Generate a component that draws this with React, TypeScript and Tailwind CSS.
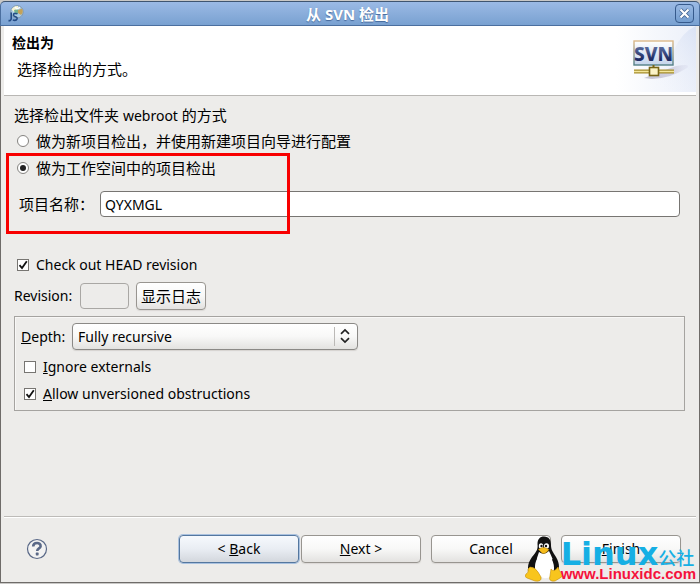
import { useState } from "react";
import type { ReactNode } from "react";

/* ── Types ─────────────────────────────────────────────────────────────── */

interface OptionProps {
  label: ReactNode;
  checked: boolean;
  onChange: () => void;
}

/* ── Shared styles ─────────────────────────────────────────────────────── */

const BUTTON =
  "h-7 rounded-[4px] border border-[#989590] bg-gradient-to-b from-white via-[#f8f8f7] to-[#e3e2e0] text-center shadow-[0_1px_1px_#dad8d5]";

/* ── Radio and tick box ────────────────────────────────────────────────── */

function Radio({ label, checked, onChange }: OptionProps) {
  return (
    <label className="flex h-[27px] items-center gap-[7px] pl-[3px]">
      <span className="relative flex h-3 w-3 shrink-0">
        <input
          type="radio"
          name="checkout-mode"
          checked={checked}
          onChange={onChange}
          className="h-3 w-3 appearance-none rounded-full border border-[#858380] bg-white"
        />
        {checked && (
          <span className="pointer-events-none absolute inset-[3px] rounded-full bg-[#222]" />
        )}
      </span>
      <span className="text-[15px]">{label}</span>
    </label>
  );
}

function Check({ label, checked, onChange }: OptionProps) {
  return (
    <label className="flex h-[27px] items-center gap-[7px] pl-[3px]">
      <span className="relative flex h-3 w-3 shrink-0">
        <input
          type="checkbox"
          checked={checked}
          onChange={onChange}
          className="h-3 w-3 appearance-none border border-[#777572] bg-white"
        />
        {checked && (
          <svg viewBox="0 0 12 12" className="pointer-events-none absolute inset-0 h-3 w-3">
            <path d="M2.5 6.2 L5 9 L9.8 2.3" fill="none" stroke="#111" strokeWidth="1.8" />
          </svg>
        )}
      </span>
      <span>{label}</span>
    </label>
  );
}

/* ── Icons ─────────────────────────────────────────────────────────────── */

function AppIcon() {
  return (
    <svg width="16" height="17" viewBox="0 0 16 17" aria-hidden="true">
      <circle cx="9" cy="6.8" r="6.2" fill="#a9cbe4" stroke="#7d8f9c" strokeWidth="0.8" />
      <path d="M3.5 4.5 Q6 0.5 10 1 L10 4 L6 7 Z" fill="#f7f3cf" />
      <path d="M10 5 L14 3.5 Q16 7 13 10 L10 8 Z" fill="#c4a259" />
      <path d="M6 5 L10 4 L10 9 L7 9 Z" fill="#74b18f" />
      <path d="M7 2 L9 4 L12 2.4" fill="none" stroke="#fff" strokeWidth="1.4" />
      <path d="M3.2 7.5 V13.6 Q3 16 0.5 15.6" fill="none" stroke="#244c86" strokeWidth="1.6" />
      <path d="M9.4 8.8 Q5.3 7.8 5.5 10 Q5.7 11.4 7.5 11.8 Q9.4 12.4 9 14 Q8.2 16 4.8 15" fill="none" stroke="#244c86" strokeWidth="1.6" />
    </svg>
  );
}

function SvnBanner() {
  return (
    <svg width="80" height="66" viewBox="0 0 80 66" className="shrink-0" aria-hidden="true">
      <defs>
        <linearGradient id="haze" x1="0" y1="0" x2="1" y2="0">
          <stop offset="0" stopColor="#fff" />
          <stop offset="1" stopColor="#dfe6f6" />
        </linearGradient>
        <linearGradient id="swoosh" x1="0" y1="1" x2="1" y2="0">
          <stop offset="0" stopColor="#fff" stopOpacity="0" />
          <stop offset="1" stopColor="#ced9f1" />
        </linearGradient>
        <linearGradient id="panel" x1="0" y1="0" x2="0" y2="1">
          <stop offset="0" stopColor="#fff" />
          <stop offset="1" stopColor="#c5d4ec" />
        </linearGradient>
        <linearGradient id="frame" x1="0" y1="0" x2="0" y2="1">
          <stop offset="0" stopColor="#dcb98a" />
          <stop offset="1" stopColor="#527f86" />
        </linearGradient>
        <linearGradient id="word" x1="0" y1="0" x2="0" y2="1">
          <stop offset="0" stopColor="#7388b8" />
          <stop offset="0.7" stopColor="#1f2c63" />
        </linearGradient>
        <linearGradient id="shade" gradientUnits="userSpaceOnUse" x1="28" y1="0" x2="74" y2="0">
          <stop offset="0" stopColor="#a29fb8" />
          <stop offset="0.6" stopColor="#bcb9ce" />
          <stop offset="1" stopColor="#d8dcef" stopOpacity="0.4" />
        </linearGradient>
      </defs>
      <rect width="80" height="66" fill="url(#haze)" opacity="0.6" />
      <path d="M22 66 Q46 52 58 24 Q66 6 80 0 V66 Z" fill="url(#swoosh)" opacity="0.6" />
      <path d="M28 52 L60 40 Q76 37 71 42 Q56 52 36 53 Z" fill="url(#shade)" opacity="0.6" />
      <rect x="18" y="15" width="39" height="24" fill="url(#panel)" stroke="url(#frame)" strokeWidth="1.4" />
      <text x="37.5" y="35" textAnchor="middle" fontFamily="Noto Sans, sans-serif" fontWeight="800" fontSize="19" fill="url(#word)">SVN</text>
      <path d="M18 45.5 H58" stroke="#a58c2d" strokeWidth="4" />
      <path d="M18 45.5 H58" stroke="#f3e69b" strokeWidth="1.4" />
      <path d="M37.5 39 V42" stroke="#776515" strokeWidth="2" />
      <rect x="33.5" y="41.5" width="9" height="8" fill="#fbf3c6" stroke="#776515" strokeWidth="1.6" />
    </svg>
  );
}

function Penguin() {
  return (
    <svg width="38" height="46" viewBox="0 0 38 46" aria-hidden="true">
      <path d="M19 0.5 C24 0.5 26 4 26 9 C26 14 28 16 31 21 C35 28 35 34 31 40 H8 C1 36 2 28 7 21 C12 15 13 13 12.5 8 C12.5 3 15 0.5 19 0.5 Z" fill="#111" />
      <path d="M14 16 Q19 20 24 15 Q26 19 28 24 Q32 33 27 40 Q19 45 12 39 Q7 29 12 22 Z" fill="#fff" />
      <path d="M11 22 Q8 28 9 34 M28 23 Q31 29 30 35" fill="none" stroke="#111" strokeWidth="2.4" />
      <ellipse cx="16" cy="10" rx="2.2" ry="2.8" fill="#fff" />
      <ellipse cx="21.5" cy="10" rx="2.5" ry="2.8" fill="#fff" />
      <circle cx="16.5" cy="10" r="1.2" fill="#111" />
      <circle cx="21" cy="10" r="1.2" fill="#111" />
      <path d="M13.5 13.5 Q18 9.5 24 13.5 Q20 19 17 17 Z" fill="#f5bc1c" stroke="#b6820d" strokeWidth="0.5" />
      <path d="M5 31 Q10 31 13 36 L16 41 Q17 46 10 45 L2 42 Q-1 41 1 38 Q4 37 3 33 Z" fill="#f8c51d" stroke="#c58d0a" strokeWidth="0.6" />
      <path d="M26 33 Q29 37 33 31 Q34 35 37 38 Q39 40 35 42 L30 45 Q23 46 25 40 Z" fill="#f8c51d" stroke="#c58d0a" strokeWidth="0.6" />
    </svg>
  );
}

/* ── Dialog ────────────────────────────────────────────────────────────── */

export default function App() {
  const [mode, setMode] = useState<"new" | "workspace">("workspace");
  const [name, setName] = useState("QYXMGL");
  const [head, setHead] = useState(true);
  const [ignoreExternals, setIgnoreExternals] = useState(false);
  const [allowObstructions, setAllowObstructions] = useState(true);

  return (
    <div className="flex min-h-screen flex-col bg-[#c9c8c6] pb-px font-['Noto_Sans','Noto_Sans_CJK_SC',sans-serif] text-sm leading-5 text-black">
      {/* Title bar */}
      <header className="mt-px flex h-[25px] items-center rounded-t-[5px] border border-[#4b6f9f] border-t-[#3f5570] bg-gradient-to-b from-[#9bbae5] to-[#79a1d1] pr-[5px] pl-[7px]">
        <AppIcon />
        <h1 className="flex-1 pr-1 text-center text-[15px] font-bold text-white [text-shadow:0_1px_1px_#45689a]">
          从 SVN 检出
        </h1>
        <button
          type="button"
          aria-label="Close"
          className="flex h-[19px] w-[19px] items-center justify-center rounded-[4px] border border-[#365a8c] bg-gradient-to-b from-[#98b8e3] to-[#739dcf]"
        >
          <svg width="11" height="11" viewBox="0 0 11 11">
            <path d="M1.5 1.5 L9.5 9.5 M9.5 1.5 L1.5 9.5" stroke="#3e5f8e" strokeWidth="3.8" />
            <path d="M1.5 1.5 L9.5 9.5 M9.5 1.5 L1.5 9.5" stroke="#fff" strokeWidth="2.2" />
          </svg>
        </button>
      </header>

      <div className="flex flex-1 flex-col border-x border-b border-[#6f6c69] bg-[#edecea] px-[3px]">
        {/* Banner */}
        <div className="flex h-[70px] items-start justify-between border-b border-[#b9b7b4] bg-white">
          <div className="pt-[7px] pl-2">
            <h2 className="font-bold">检出为</h2>
            <p className="pt-[6px] pl-[5px] text-[15px]">选择检出的方式。</p>
          </div>
          <SvnBanner />
        </div>

        <main className="flex-1 px-[10px] pt-[9px]">
          {/* Checkout mode */}
          <div className="relative">
            <p className="text-[15px]">
              选择检出文件夹 <span className="text-sm">webroot</span> 的方式
            </p>
            <div className="pt-px">
              <Radio
                label="做为新项目检出，并使用新建项目向导进行配置"
                checked={mode === "new"}
                onChange={() => setMode("new")}
              />
              <Radio
                label="做为工作空间中的项目检出"
                checked={mode === "workspace"}
                onChange={() => setMode("workspace")}
              />
            </div>
            <div className="flex items-center pt-[10px] pr-[6px] pl-[5px]">
              <label htmlFor="project" className="w-[81px] text-[15px]">
                项目名称：
              </label>
              <input
                id="project"
                value={name}
                onChange={(e) => setName(e.target.value)}
                className="h-[26px] min-w-0 flex-1 rounded-[4px] border border-[#777572] bg-white px-1 outline-none"
              />
            </div>
            {/* Highlighted choice */}
            <div className="pointer-events-none absolute top-12 -left-2 h-[81px] w-[284px] border-3 border-[#f80000]" />
          </div>

          {/* Revision */}
          <div className="pt-[34px]">
            <Check label="Check out HEAD revision" checked={head} onChange={() => setHead(!head)} />
            <div className="flex items-center pt-1">
              <label htmlFor="revision" className="w-[66px] whitespace-nowrap">
                Revision:
              </label>
              <input
                id="revision"
                disabled={head}
                className="h-[26px] w-[49px] rounded-[4px] border border-[#a9a7a4] bg-[#edecea] px-1"
              />
              <button type="button" className={`${BUTTON} ml-[7px] px-1 text-[15px]`}>
                显示日志
              </button>
            </div>
          </div>

          {/* Depth and flags */}
          <div className="mt-[6px] mr-px border border-[#a5a3a0] px-[6px] pt-[6px] pb-[3px] shadow-[inset_1px_1px_0_#f8f7f6]">
            <div className="flex items-center">
              <label htmlFor="depth" className="w-[51px] whitespace-nowrap">
                <u>D</u>epth:
              </label>
              <div className="relative w-[286px]">
                <select
                  id="depth"
                  className="h-[27px] w-full appearance-none rounded-[4px] border border-[#8b8986] bg-gradient-to-b from-white via-[#f8f8f7] to-[#e3e2e0] px-[5px] shadow-[0_1px_1px_#d5d3d0]"
                >
                  <option>Fully recursive</option>
                </select>
                <svg width="23" height="19" viewBox="0 0 23 19" className="pointer-events-none absolute top-1 right-[1px]">
                  <path d="M0.5 0 V19" stroke="#bbb9b6" />
                  <path d="M7 6.8 L11 3 L15 6.8 M7 11.2 L11 15 L15 11.2" fill="none" stroke="#222" strokeWidth="1.7" />
                </svg>
              </div>
            </div>
            <div className="pt-[3px]">
              <Check
                label={<><u>I</u>gnore externals</>}
                checked={ignoreExternals}
                onChange={() => setIgnoreExternals(!ignoreExternals)}
              />
              <Check
                label={<><u>A</u>llow unversioned obstructions</>}
                checked={allowObstructions}
                onChange={() => setAllowObstructions(!allowObstructions)}
              />
            </div>
          </div>
        </main>

        {/* Wizard buttons */}
        <footer className="relative flex h-[66px] items-center justify-between border-t border-[#bdbbb8] pr-[15px] pb-[2px] pl-[22px] shadow-[inset_0_1px_0_#fff]">
          <button type="button" aria-label="Help">
            <svg width="22" height="22" viewBox="0 0 22 22">
              <circle cx="11" cy="11" r="9.5" fill="#f2f2f2" stroke="#596887" strokeWidth="1.2" />
              <path d="M7.2 8.5 C7.2 3.9 15 4 14.6 8.3 C14.4 10.5 11.2 10.4 11.2 13" fill="none" stroke="#596887" strokeWidth="2.6" />
              <rect x="9.8" y="14.6" width="2.8" height="2.8" rx="0.6" fill="#596887" />
            </svg>
          </button>
          <div className="flex">
            <button
              type="button"
              className="h-7 w-[120px] rounded-[4px] border border-[#54779f] bg-gradient-to-b from-[#f6f9fd] via-[#e9edf3] to-[#d3d7dd] shadow-[0_0_0_1px_#a9c1df]"
            >
              &lt; <u>B</u>ack
            </button>
            <button type="button" className={`${BUTTON} ml-[2px] w-[120px]`}>
              <u>N</u>ext &gt;
            </button>
            <button type="button" className={`${BUTTON} ml-[10px] w-[120px]`}>
              Cancel
            </button>
            <button type="button" className={`${BUTTON} ml-[10px] w-[120px]`}>
              <u>F</u>inish
            </button>
          </div>

          {/* Site mark laid over the buttons */}
          <div className="pointer-events-none absolute right-0 bottom-0 flex items-end">
            <Penguin />
            <div className="-ml-[2px] whitespace-nowrap">
              <div className="flex items-baseline leading-4 text-[#16afe4]">
                <span className="font-['DejaVu_Sans'] text-[32px] font-bold">Linux</span>
                <span className="text-[18px] font-medium">公社</span>
              </div>
              <div className="font-['Liberation_Sans'] text-[15px] leading-4 font-bold text-[#f5123c]">
                www.Linuxidc.com
              </div>
            </div>
          </div>
        </footer>
      </div>
    </div>
  );
}
